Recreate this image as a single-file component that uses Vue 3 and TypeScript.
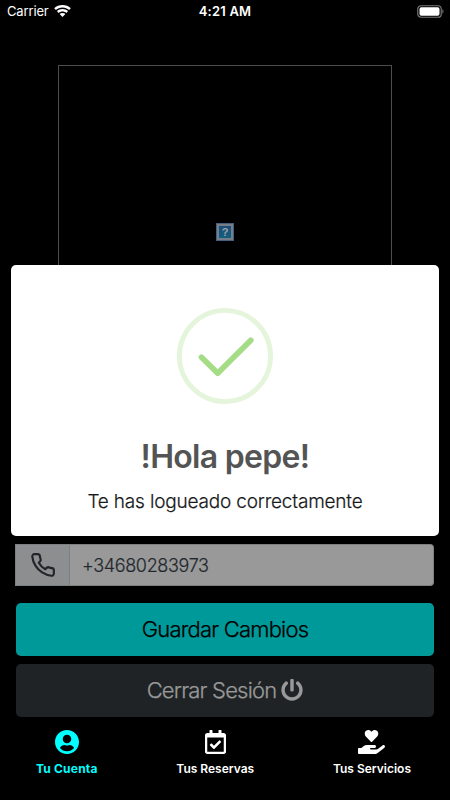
<script setup lang="ts">
import { ref } from 'vue'

interface Tab {
  label: string
  viewBox: string
  width: number
  path: string
}

const phone = ref('+34680283973')
const active = ref(0)

const tabs: Tab[] = [
  {
    label: 'Tu Cuenta',
    viewBox: '0 8 496 496',
    width: 24,
    path: 'M248 8C111 8 0 119 0 256s111 248 248 248 248-111 248-248S385 8 248 8zm0 96c48.6 0 88 39.4 88 88s-39.4 88-88 88-88-39.4-88-88 39.4-88 88-88zm0 344c-58.7 0-111.3-26.6-146.5-68.2 18.8-35.4 55.6-59.8 98.5-59.8 2.4 0 4.8.4 7.1 1.1 13 4.2 26.6 6.9 40.9 6.9 14.3 0 28-2.7 40.9-6.9 2.3-.7 4.7-1.1 7.1-1.1 42.9 0 79.7 24.4 98.5 59.8C359.3 421.4 306.7 448 248 448z',
  },
  {
    label: 'Tus Reservas',
    viewBox: '0 0 448 512',
    width: 21,
    path: 'M400 64h-48V12c0-6.627-5.373-12-12-12h-40c-6.627 0-12 5.373-12 12v52H160V12c0-6.627-5.373-12-12-12h-40c-6.627 0-12 5.373-12 12v52H48C21.49 64 0 85.49 0 112v352c0 26.51 21.49 48 48 48h352c26.51 0 48-21.49 48-48V112c0-26.51-21.49-48-48-48zm-6 400H54a6 6 0 0 1-6-6V160h352v298a6 6 0 0 1-6 6zm-52.849-200.65L198.842 404.519c-4.705 4.667-12.303 4.637-16.971-.068l-75.091-75.699c-4.667-4.705-4.637-12.303.068-16.971l22.719-22.536c4.705-4.667 12.303-4.637 16.97.069l44.104 44.461 111.072-110.181c4.705-4.667 12.303-4.637 16.971.068l22.536 22.718c4.667 4.705 4.636 12.303-.069 16.97z',
  },
  {
    label: 'Tus Servicios',
    viewBox: '0 0 576 512',
    width: 27,
    path: 'M275.3 250.5c7 7.4 18.4 7.4 25.5 0l108.9-114.2c31.6-33.2 29.8-88.2-5.6-118.8-30.8-26.7-76.7-21.9-104.9 7.7L288 36.9l-11.1-11.6C248.7-4.4 202.8-9.2 172 17.5c-35.3 30.6-37.2 85.6-5.6 118.8l108.9 114.2zm290 77.6c-11.8-10.7-30.2-10-42.6 0L430.3 402c-11.3 9.1-25.4 14-40 14H272c-8.8 0-16-7.2-16-16s7.2-16 16-16h78.3c15.9 0 30.7-10.9 33.3-26.6 3.3-20-12.1-37.4-31.6-37.4H192c-27 0-53.1 9.3-74.1 26.3L71.4 384H16c-8.8 0-16 7.2-16 16v96c0 8.8 7.2 16 16 16h356.8c14.5 0 28.6-4.9 40-14L564 377c15.2-12.1 16.4-35.3 1.3-48.9z',
  },
]
</script>

<template>
  <div class="screen">
    <header class="status">
      <div class="carrier">
        <span>Carrier</span>
        <svg class="wifi" viewBox="0 0 17 12" width="17" height="12">
          <path d="M8.5 0C5.3 0 2.4 1.2.2 3.2L1.9 5C3.6 3.4 5.9 2.5 8.5 2.5S13.4 3.4 15.1 5l1.7-1.8C14.6 1.2 11.7 0 8.5 0z" />
          <path d="M8.5 4C6.3 4 4.4 4.8 2.9 6.1l1.7 1.8C5.6 6.9 7 6.4 8.5 6.4s2.9.5 3.9 1.5l1.7-1.8C12.6 4.8 10.7 4 8.5 4z" />
          <path d="M8.5 7.9c-1.1 0-2.1.4-2.9 1.1l2.9 3 2.9-3c-.8-.7-1.8-1.1-2.9-1.1z" />
        </svg>
      </div>
      <div class="clock">4:21 AM</div>
      <div class="power">
        <svg viewBox="0 0 28 13" width="28" height="13">
          <rect class="shell" x="0.75" y="0.75" width="23.5" height="11.5" rx="3.3" />
          <rect class="charge" x="2.5" y="2.3" width="20" height="8.4" rx="1.8" />
          <path class="nub" d="M25.4 4.3c1.5.6 1.5 3.8 0 4.4z" />
        </svg>
      </div>
    </header>

    <main class="content">
      <div class="photo">
        <div class="missing">?</div>
      </div>

      <div class="field">
        <div class="addon">
          <svg viewBox="0 0 24 24" width="26" height="26">
            <path d="M22 16.92v3a2 2 0 0 1-2.18 2 19.79 19.79 0 0 1-8.63-3.07 19.5 19.5 0 0 1-6-6 19.79 19.79 0 0 1-3.07-8.67A2 2 0 0 1 4.11 2h3a2 2 0 0 1 2 1.72 12.84 12.84 0 0 0 .7 2.81 2 2 0 0 1-.45 2.11L8.09 9.91a16 16 0 0 0 6 6l1.27-1.27a2 2 0 0 1 2.11-.45 12.84 12.84 0 0 0 2.81.7A2 2 0 0 1 22 16.92z" />
          </svg>
        </div>
        <div class="value">{{ phone }}</div>
      </div>

      <button class="btn save" type="button">Guardar Cambios</button>
      <button class="btn logout" type="button">
        <span>Cerrar Sesión</span>
        <svg viewBox="0 0 512 512" width="22" height="22">
          <path d="M400 54.1c63 45 104 118.6 104 201.9 0 136.8-110.8 247.7-247.5 248C120 504.3 8.2 393 8 256.4 7.9 173.1 48.9 99.3 111.8 54.2c11.7-8.3 28-4.8 35 7.7L162.6 90c5.9 10.5 3.1 23.8-6.6 31-41.5 30.8-68 79.6-68 134.9-.1 92.3 74.5 168.1 168 168.1 91.6 0 168.6-74.2 168-169.1-.3-51.8-24.7-101.8-68.1-134-9.7-7.2-12.4-20.5-6.5-30.9l15.8-28.1c7-12.4 23.2-16.1 34.8-7.8zM296 264V24c0-13.3-10.7-24-24-24h-32c-13.3 0-24 10.7-24 24v240c0 13.3 10.7 24 24 24h32c13.3 0 24-10.7 24-24z" />
        </svg>
      </button>
    </main>

    <nav class="tabs">
      <a
        v-for="(tab, i) in tabs"
        :key="tab.label"
        class="tab"
        :class="{ active: i === active }"
        @click="active = i"
      >
        <svg :viewBox="tab.viewBox" :width="tab.width" height="24"><path :d="tab.path" /></svg>
        <span>{{ tab.label }}</span>
      </a>
    </nav>

    <section class="modal" role="dialog">
      <svg class="success" viewBox="0 0 96 96" width="96" height="96">
        <circle cx="48" cy="48" r="45.6" />
        <path d="M24.5 49.3 40.7 65.3 73.8 32.3" />
      </svg>
      <h2>!Hola pepe!</h2>
      <p>Te has logueado correctamente</p>
    </section>
  </div>
</template>

<style>
body {
  margin: 0;
  background: #000;
}
</style>

<style scoped>
.screen {
  position: relative;
  display: flex;
  flex-direction: column;
  width: 450px;
  height: 800px;
  overflow: hidden;
  background: #000;
  color: #fff;
  font-family: Inter, 'Liberation Sans', sans-serif;
}

.status {
  display: grid;
  grid-template-columns: 1fr auto 1fr;
  align-items: center;
  height: 22px;
  padding: 0 5px 0 7px;
  box-sizing: border-box;
  font-size: 13px;
}

.carrier {
  display: flex;
  align-items: center;
  gap: 5px;
  letter-spacing: -0.15px;
}

.wifi {
  margin-top: -1px;
  fill: #fff;
}

.clock {
  margin-left: -2px;
  font-weight: 600;
  letter-spacing: 0.2px;
}

.power {
  display: flex;
  justify-content: flex-end;
}

.shell {
  fill: none;
  stroke: #777;
  stroke-width: 1.2;
}

.charge {
  fill: #fff;
}

.nub {
  fill: #777;
}

.content {
  display: flex;
  flex-direction: column;
  height: 698px;
  padding: 43px 16px 0;
  box-sizing: border-box;
}

.photo {
  display: flex;
  align-items: center;
  justify-content: center;
  align-self: center;
  width: 334px;
  height: 334px;
  box-sizing: border-box;
  border: 1px solid #4d4d4d;
}

.missing {
  width: 12px;
  height: 12px;
  border: 2px solid #757d87;
  outline: 1px solid #43617f;
  background: linear-gradient(#1c4d7c, #12607f);
  color: #a0a29f;
  font: bold 11px/13px 'Liberation Sans', sans-serif;
  text-align: center;
}

.field {
  display: flex;
  height: 42px;
  margin: 145px 0 0 -1px;
  box-sizing: border-box;
  color: #212529;
}

.addon {
  display: flex;
  align-items: center;
  justify-content: center;
  width: 55px;
  box-sizing: border-box;
  border: 1px solid #7d8083;
  background: #8c8e90;
}

.addon path {
  fill: none;
  stroke: #212529;
  stroke-width: 2;
  stroke-linecap: round;
  stroke-linejoin: round;
}

.value {
  flex: 1;
  padding-left: 12px;
  border: 1px solid #7d8083;
  border-left: 0;
  border-radius: 0 4px 4px 0;
  background: #999;
  color: #23282d;
  font-size: 18px;
  font-weight: 300;
  line-height: 41px;
  letter-spacing: -0.35px;
  -webkit-text-stroke: 0.2px currentColor;
}

.btn {
  display: flex;
  align-items: center;
  justify-content: center;
  height: 53px;
  padding: 0 0 1px;
  box-sizing: border-box;
  border: 0;
  border-radius: 5px;
  font-family: inherit;
  font-size: 22px;
  font-weight: 300;
  letter-spacing: -0.8px;
  -webkit-text-stroke: 0.25px currentColor;
}

.save {
  margin-top: 17px;
  background: #009999;
  color: #000;
}

.logout {
  gap: 5px;
  margin-top: 8px;
  background: #1f2326;
  color: #999;
}

.logout svg {
  margin-top: -1px;
  fill: #999;
}

.tabs {
  display: flex;
  justify-content: space-between;
  padding: 10px 39px 0 36px;
}

.tab {
  display: flex;
  flex-direction: column;
  align-items: center;
  gap: 7px;
  color: #fff;
  font-size: 12px;
  font-weight: 600;
  line-height: 16px;
}

.tab svg {
  fill: currentColor;
}

.tab.active {
  color: #00ffff;
  font-weight: 700;
  letter-spacing: 0.2px;
}

.modal {
  position: absolute;
  top: 265px;
  left: 11px;
  display: flex;
  flex-direction: column;
  align-items: center;
  width: 428px;
  height: 270.5px;
  padding-top: 43px;
  box-sizing: border-box;
  border-radius: 5px;
  background: #fff;
}

.success {
  fill: none;
}

.success circle {
  stroke: #e4f5db;
  stroke-width: 4.8;
}

.success path {
  stroke: #a5dc86;
  stroke-width: 5.7;
  stroke-linecap: round;
  stroke-linejoin: round;
}

.modal h2 {
  margin: 32px 0 0;
  color: #545454;
  font-size: 32px;
  font-weight: 600;
  line-height: 42px;
  letter-spacing: -0.7px;
}

.modal p {
  margin: 11px 0 0;
  color: #16181a;
  font-size: 19px;
  font-weight: 300;
  line-height: 26px;
  letter-spacing: -0.18px;
  -webkit-text-stroke: 0.2px currentColor;
}
</style>
